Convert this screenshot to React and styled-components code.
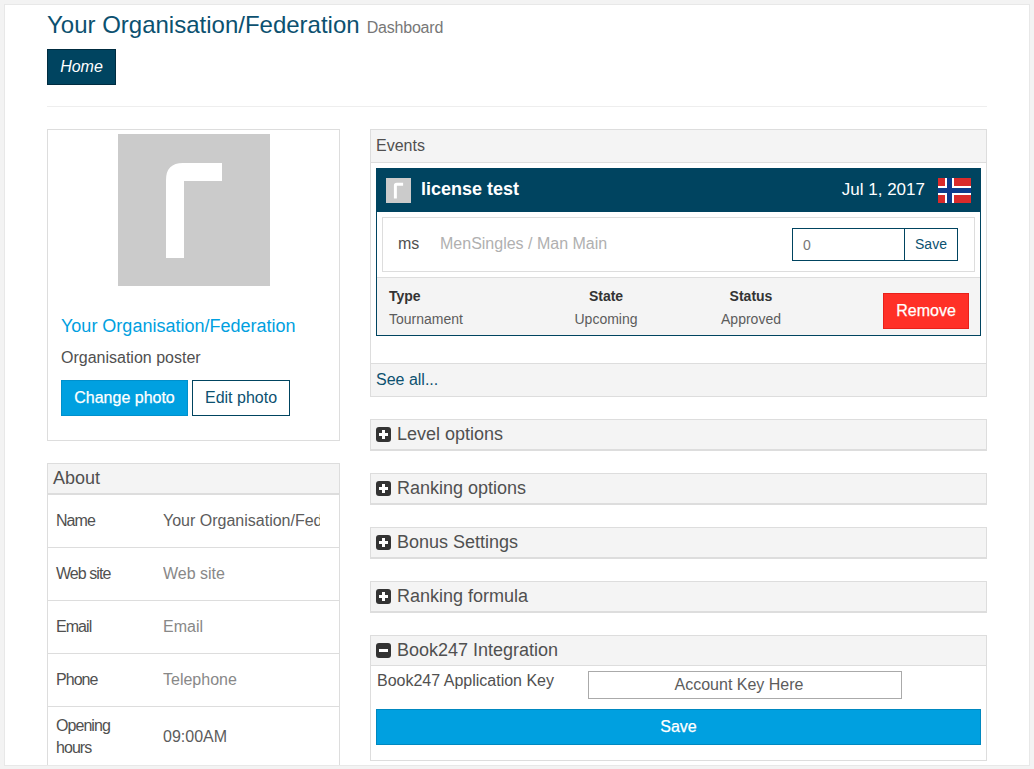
import React from "react";
import styled, { createGlobalStyle } from "styled-components";

const navy = "#004460";
const navyText = "#0c5170";
const blue = "#00a0e0";
const line = "#dddddd";

const Global = createGlobalStyle`
  html, body { margin: 0; padding: 0; background: #f3f3f3; }
  body { font-family: "Liberation Sans", Arial, sans-serif; color: #444; font-size: 16px; }
  * { box-sizing: border-box; }
`;

const Page = styled.div`
  height: 769px;
  padding: 4px 4px 3px 4px;
  overflow: hidden;
  width: 1034px;
`;
const Sheet = styled.main`
  height: 762px;
  width: 1026px;
  background: #fff;
  border: 1px solid #e8e8e8;
  padding: 0 42px;
  overflow: hidden;
`;
const TitleRow = styled.header`
  height: 44px;
  padding-top: 5px;
  display: flex;
  align-items: baseline;
  gap: 7px;
`;
const Title = styled.h1`
  margin: 0;
  font-size: 24px;
  line-height: 29px;
  font-weight: 400;
  color: ${navyText};
`;
const Subtitle = styled.small`
  font-size: 16px;
  letter-spacing: -0.2px;
  color: #777;
`;
const Nav = styled.nav`
  display: flex;
  height: 36px;
`;
const NavItem = styled.a`
  width: 69px;
  height: 36px;
  display: flex;
  align-items: center;
  justify-content: center;
  background: ${navy};
  border: 1px solid #002c40;
  color: #fff;
  font-style: italic;
  font-size: 16px;
`;
const Rule = styled.hr`
  margin: 21px 0 22px;
  border: 0;
  height: 1px;
  background: #eeeeee;
`;
const Columns = styled.div`
  display: grid;
  grid-template-columns: 293px 617px;
  column-gap: 30px;
  align-items: start;
`;
const Column = styled.div`
  display: flex;
  flex-direction: column;
  gap: 22px;
`;
const ProfileCard = styled.section`
  height: 312px;
  border: 1px solid ${line};
  padding: 4px 13px 0;
`;
const Poster = styled.div`
  width: 152px;
  height: 152px;
  margin: 0 auto 0 57px;
  background: #cbcbcb;
  display: flex;
  align-items: center;
  justify-content: center;
`;
const OrgName = styled.a`
  display: block;
  margin-top: 28px;
  font-size: 18px;
  line-height: 24px;
  color: ${blue};
`;
const PosterLabel = styled.p`
  margin: 8px 0 10px;
  font-size: 16px;
  line-height: 24px;
  color: #505050;
`;
const ButtonRow = styled.div`
  display: flex;
  gap: 4px;
`;
const Button = styled.button`
  height: 36px;
  padding: 0;
  width: ${(p) => p.$w}px;
  font: 400 16px "Liberation Sans", Arial, sans-serif;
  background: ${(p) => p.$bg || "#fff"};
  color: ${(p) => p.$fg || navyText};
  border: 1px solid ${(p) => p.$bd || navy};
  -webkit-text-stroke: ${(p) => (p.$solid ? "0.25px" : "0")};
`;
const AboutCard = styled.section`
  border-left: 1px solid ${line};
  border-right: 1px solid ${line};
`;
const AboutHeader = styled.h2`
  height: 32px;
  margin: 0 -1px;
  padding: 0 5px 0 5px;
  display: flex;
  align-items: center;
  background: #f4f4f4;
  border: 1px solid ${line};
  border-bottom-width: 2px;
  font-size: 18px;
  font-weight: 400;
  color: #505050;
`;
const AboutRow = styled.div`
  display: grid;
  grid-template-columns: 107px 157px;
  align-items: center;
  padding-left: 8px;
  height: ${(p) => p.$h || 53}px;
  border-bottom: 1px solid ${(p) => (p.$last ? "transparent" : line)};
`;
const AboutKey = styled.span`
  font-size: 16px;
  line-height: 22px;
  letter-spacing: -0.95px;
  color: #505050;
`;
const AboutValue = styled.span`
  font-size: 16px;
  line-height: 22px;
  color: ${(p) => (p.$empty ? "#888" : "#5c5c5c")};
  white-space: nowrap;
  overflow: hidden;
`;
const Panel = styled.section`
  border: 1px solid ${line};
`;
const PanelHead = styled.div`
  height: ${(p) => p.$h || 32}px;
  padding: 0 5px ${(p) => (p.$lift ? 1 : 0)}px;
  display: flex;
  align-items: center;
  gap: 6px;
  background: #f4f4f4;
  font-size: ${(p) => p.$fs || 16}px;
  color: #505050;
  border-bottom: 1px solid ${line};
`;
const EventsBody = styled.div`
  padding: 5px 5px 27px;
`;
const EventCard = styled.article`
  border: 1px solid ${navy};
`;
const EventTop = styled.div`
  height: 44px;
  margin: -1px -1px 0;
  background: ${navy};
  color: #fff;
  display: flex;
  align-items: center;
  padding: 0 10px;
`;
const EventLogo = styled.span`
  width: 25px;
  height: 25px;
  background: #cbcbcb;
  display: flex;
  align-items: center;
  justify-content: center;
  margin-right: 10px;
`;
const EventName = styled.strong`
  font-size: 18px;
  flex: 1;
  padding-bottom: 2px;
`;
const EventDate = styled.span`
  font-size: 17px;
  margin-right: 13px;
`;
const EntryWrap = styled.div`
  padding: 5px 5px;
  height: 66px;
  border-bottom: 1px solid ${line};
`;
const Entry = styled.div`
  height: 55px;
  border: 1px solid ${line};
  display: flex;
  align-items: center;
  padding: 0 16px 0 15px;
`;
const EntryCode = styled.span`
  width: 42px;
  font-size: 16px;
  padding-bottom: 2px;
  color: #505050;
`;
const EntryName = styled.span`
  flex: 1;
  font-size: 16px;
  padding-bottom: 2px;
  color: #b0b0b0;
`;
const InputGroup = styled.div`
  display: flex;
  width: 166px;
  height: 33px;
  border: 1px solid ${navy};
`;
const NumberField = styled.div`
  flex: 1;
  display: flex;
  align-items: center;
  padding-left: 10px;
  font-size: 14px;
  color: #777;
  border-right: 1px solid ${navy};
`;
const GroupSave = styled.div`
  width: 52px;
  flex: none;
  display: flex;
  align-items: center;
  justify-content: center;
  padding-bottom: 1px;
  font-size: 14px;
  color: ${navyText};
`;
const Meta = styled.div`
  height: 57px;
  background: #f4f4f4;
  display: flex;
  align-items: flex-start;
  padding: 7px 11px 0 12px;
`;
const MetaCol = styled.div`
  width: ${(p) => p.$w}px;
  text-align: ${(p) => p.$align || "center"};
  font-size: 14px;
  line-height: 23px;
  color: #5c5c5c;
`;
const MetaLabel = styled.div`
  font-weight: 700;
  color: #333;
`;
const RemoveWrap = styled.div`
  margin-left: auto;
  margin-top: 8px;
`;
const SeeAll = styled.a`
  display: flex;
  align-items: center;
  height: 33px;
  padding: 0 5px;
  background: #f4f4f4;
  border-top: 1px solid ${line};
  color: ${navyText};
  font-size: 16px;
`;
const Book = styled.section`
  border: 1px solid ${line};
  height: 126px;
`;
const BookBody = styled.div`
  padding: 5px 5px 0;
`;
const KeyRow = styled.div`
  display: flex;
  height: 28px;
  margin-bottom: 10px;
`;
const KeyLabel = styled.label`
  width: 212px;
  font-size: 16px;
  line-height: 20px;
  padding: 0 0 0 1px;
  color: #505050;
`;
const KeyField = styled.div`
  width: 314px;
  height: 28px;
  border: 1px solid #aaa;
  padding-right: 12px;
  display: flex;
  align-items: center;
  justify-content: center;
  font-size: 16px;
  color: #5c5c5c;
`;

const Toggle = ({ open }) => (
  <svg width="15" height="15" viewBox="0 0 15 15">
    <rect width="15" height="15" rx="3" fill="#333" />
    {!open && <rect x="6" y="3" width="3" height="9" fill="#fff" />}
    <rect x="3" y="6" width="9" height="3" fill="#fff" />
  </svg>
);

const Logo = ({ size }) => (
  <svg width={size} height={size} viewBox="0 0 152 152">
    <path d="M48 124V46Q48 29 65 29H104V47H66V124Z" fill="#fff" />
  </svg>
);

const Flag = () => (
  <svg width="33" height="25" viewBox="0 0 33 25">
    <rect width="33" height="25" fill="#d92b2b" />
    <rect x="7" width="9" height="25" fill="#fff" />
    <rect y="8" width="33" height="9" fill="#fff" />
    <rect x="9" width="5" height="25" fill="#0b3c8c" />
    <rect y="10" width="33" height="5" fill="#0b3c8c" />
  </svg>
);

const Collapsed = ({ title }) => (
  <Panel>
    <PanelHead $h={30} $lift $fs={18}>
      <Toggle />
      {title}
    </PanelHead>
  </Panel>
);

export default function App() {
  return (
    <Page>
      <Global />
      <Sheet>
        <TitleRow>
          <Title>Your Organisation/Federation</Title>
          <Subtitle>Dashboard</Subtitle>
        </TitleRow>
        <Nav><NavItem>Home</NavItem></Nav>
        <Rule />
        <Columns>
          <Column>
            <ProfileCard>
              <Poster><Logo size={152} /></Poster>
              <OrgName>Your Organisation/Federation</OrgName>
              <PosterLabel>Organisation poster</PosterLabel>
              <ButtonRow>
                <Button $w={127} $solid $bg={blue} $fg="#fff" $bd="#0090cc">Change photo</Button>
                <Button $w={98}>Edit photo</Button>
              </ButtonRow>
            </ProfileCard>
            <AboutCard>
              <AboutHeader>About</AboutHeader>
              <AboutRow><AboutKey>Name</AboutKey><AboutValue>Your Organisation/Federation</AboutValue></AboutRow>
              <AboutRow><AboutKey>Web site</AboutKey><AboutValue $empty>Web site</AboutValue></AboutRow>
              <AboutRow><AboutKey>Email</AboutKey><AboutValue $empty>Email</AboutValue></AboutRow>
              <AboutRow><AboutKey>Phone</AboutKey><AboutValue $empty>Telephone</AboutValue></AboutRow>
              <AboutRow $h={60} $last><AboutKey>Opening<br />hours</AboutKey><AboutValue>09:00AM</AboutValue></AboutRow>
            </AboutCard>
          </Column>
          <Column>
            <Panel>
              <PanelHead $h={33}>Events</PanelHead>
              <EventsBody>
                <EventCard>
                  <EventTop>
                    <EventLogo><Logo size={25} /></EventLogo>
                    <EventName>license test</EventName>
                    <EventDate>Jul 1, 2017</EventDate>
                    <Flag />
                  </EventTop>
                  <EntryWrap>
                    <Entry>
                      <EntryCode>ms</EntryCode>
                      <EntryName>MenSingles / Man Main</EntryName>
                      <InputGroup>
                        <NumberField>0</NumberField>
                        <GroupSave>Save</GroupSave>
                      </InputGroup>
                    </Entry>
                  </EntryWrap>
                  <Meta>
                    <MetaCol $w={174} $align="left"><MetaLabel>Type</MetaLabel>Tournament</MetaCol>
                    <MetaCol $w={86}><MetaLabel>State</MetaLabel>Upcoming</MetaCol>
                    <MetaCol $w={204}><MetaLabel>Status</MetaLabel>Approved</MetaCol>
                    <RemoveWrap>
                      <Button $w={86} $solid $bg="#ff3027" $fg="#fff" $bd="#e8201a">Remove</Button>
                    </RemoveWrap>
                  </Meta>
                </EventCard>
              </EventsBody>
              <SeeAll>See all...</SeeAll>
            </Panel>
            <Collapsed title="Level options" />
            <Collapsed title="Ranking options" />
            <Collapsed title="Bonus Settings" />
            <Collapsed title="Ranking formula" />
            <Book>
              <PanelHead $h={30} $fs={18}>
                <Toggle open />
                Book247 Integration
              </PanelHead>
              <BookBody>
                <KeyRow>
                  <KeyLabel>Book247 Application Key</KeyLabel>
                  <KeyField>Account Key Here</KeyField>
                </KeyRow>
                <Button $w={605} $solid $bg={blue} $fg="#fff" $bd="#0088c0">Save</Button>
              </BookBody>
            </Book>
          </Column>
        </Columns>
      </Sheet>
    </Page>
  );
}
